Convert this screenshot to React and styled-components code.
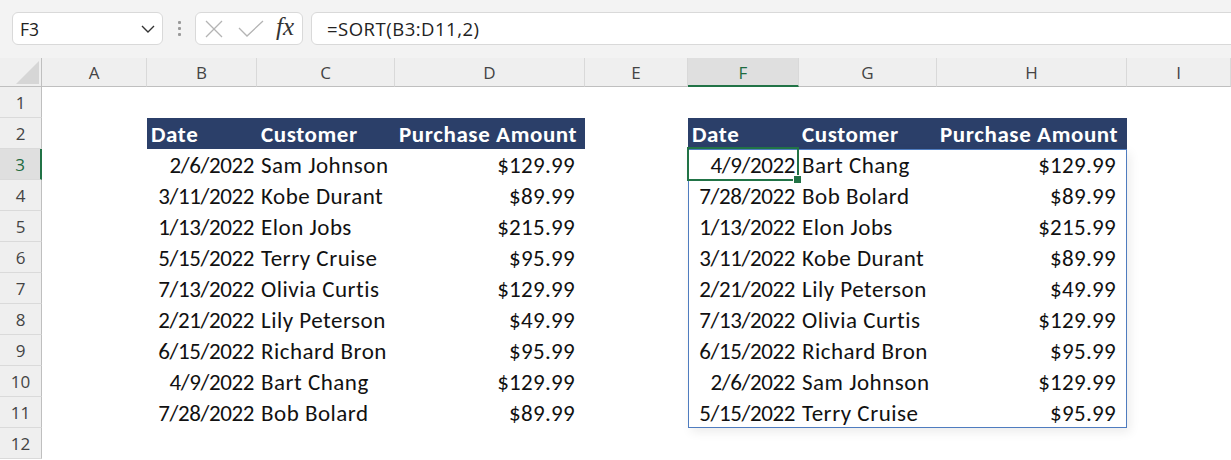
import React from 'react'
import styled, { createGlobalStyle } from 'styled-components'

const GlobalStyle = createGlobalStyle`
  html, body {
    margin: 0;
    padding: 0;
    background: #ffffff;
    overflow: hidden;
  }
  * {
    box-sizing: border-box;
  }
`

const COLS = ['A', 'B', 'C', 'D', 'E', 'F', 'G', 'H', 'I']
const ROWS = [1, 2, 3, 4, 5, 6, 7, 8, 9, 10, 11, 12]

const original = [
  ['2/6/2022', 'Sam Johnson', '$129.99'],
  ['3/11/2022', 'Kobe Durant', '$89.99'],
  ['1/13/2022', 'Elon Jobs', '$215.99'],
  ['5/15/2022', 'Terry Cruise', '$95.99'],
  ['7/13/2022', 'Olivia Curtis', '$129.99'],
  ['2/21/2022', 'Lily Peterson', '$49.99'],
  ['6/15/2022', 'Richard Bron', '$95.99'],
  ['4/9/2022', 'Bart Chang', '$129.99'],
  ['7/28/2022', 'Bob Bolard', '$89.99'],
]

// =SORT(B3:D11,2) -> sorted by the customer column
const sorted = [...original].sort((a, b) => a[1].localeCompare(b[1]))

// alignment / right padding / letter spacing for each kind of value
const kinds = {
  date: { align: 'flex-end', pad: 3, ls: -0.4 },
  text: { align: 'flex-start', pad: 0, ls: 0.5 },
  money: { align: 'flex-end', pad: 10, ls: 0.3 },
}

const App = () => {
  return (
    <>
      <GlobalStyle />
      <Window>
        <FormulaBar>
          <NameBox>
            <span>F3</span>
            <svg width="14" height="8" viewBox="0 0 14 8">
              <polyline points="1,1 7,7 13,1" fill="none" stroke="#333" strokeWidth="1.4" />
            </svg>
          </NameBox>
          <Dots>
            <i />
            <i />
            <i />
          </Dots>
          <IconBox>
            <svg width="20" height="18" viewBox="0 0 20 18">
              <line x1="2" y1="1" x2="18" y2="17" stroke="#b4b4b4" strokeWidth="1.3" />
              <line x1="18" y1="1" x2="2" y2="17" stroke="#b4b4b4" strokeWidth="1.3" />
            </svg>
            <svg width="26" height="17" viewBox="0 0 26 17">
              <polyline points="1,8 9,16 25,1" fill="none" stroke="#b4b4b4" strokeWidth="1.3" />
            </svg>
            <Fx>fx</Fx>
          </IconBox>
          <FormulaInput>=SORT(B3:D11,2)</FormulaInput>
        </FormulaBar>

        <Sheet>
          <Corner>
            <svg width="42" height="29" viewBox="0 0 42 29">
              <polygon points="16,26 39,26 39,3" fill="#d6d6d6" />
            </svg>
          </Corner>
          {COLS.map((c) => (
            <ColHeader key={c} $active={c === 'F'}>{c}</ColHeader>
          ))}
          {ROWS.map((r) => (
            <RowHeader key={r} $row={r} $active={r === 3}>{r}</RowHeader>
          ))}

          <Table $col={3}>
            <HeadRow>
              <HeadCell>Date</HeadCell>
              <HeadCell>Customer</HeadCell>
              <HeadCell>Purchase Amount</HeadCell>
            </HeadRow>
            <Body>
              {original.map((row, i) => (
                <Row key={i}>
                  <Cell $kind="date">{row[0]}</Cell>
                  <Cell $kind="text">{row[1]}</Cell>
                  <Cell $kind="money">{row[2]}</Cell>
                </Row>
              ))}
            </Body>
          </Table>

          <Table $col={7}>
            <HeadRow>
              <HeadCell>Date</HeadCell>
              <HeadCell>Customer</HeadCell>
              <HeadCell>Purchase Amount</HeadCell>
            </HeadRow>
            <Body $framed>
              {sorted.map((row, i) => (
                <Row key={i}>
                  <Cell $kind="date" $selected={i === 0}>{row[0]}</Cell>
                  <Cell $kind="text">{row[1]}</Cell>
                  <Cell $kind="money">{row[2]}</Cell>
                </Row>
              ))}
            </Body>
          </Table>
        </Sheet>
      </Window>
    </>
  )
}

const Window = styled.div`
width: 1231px;
height: 460px;
overflow: hidden;
background: #ffffff;
`

const FormulaBar = styled.div`
height: 58px;
background: #f3f3f3;
display: flex;
align-items: flex-start;
padding: 12px 0 0 12px;
font-family: "Open Sans", "Noto Sans", sans-serif;
color: #222;
`

const NameBox = styled.div`
width: 151px;
height: 33px;
background: #fff;
border: 1px solid #d9d9d9;
border-radius: 6px;
display: flex;
align-items: center;
justify-content: space-between;
padding: 0 7px 0 7px;
font-size: 17.5px;
svg {
    margin-top: 1px;
}
`

const Dots = styled.div`
width: 32px;
height: 33px;
display: flex;
flex-direction: column;
align-items: center;
justify-content: center;
gap: 3px;
i {
    width: 3px;
    height: 3px;
    background: #9a9a9a;
    border-radius: 1px;
}
`

const IconBox = styled.div`
width: 108px;
height: 33px;
background: #fff;
border: 1px solid #d9d9d9;
border-radius: 6px;
display: flex;
align-items: center;
padding: 0 6px 0 8px;
gap: 14px;
`

const Fx = styled.span`
font-family: "Liberation Serif", "DejaVu Serif", serif;
font-style: italic;
font-size: 25px;
color: #333;
margin-left: -2px;
margin-top: -3px;
`

const FormulaInput = styled.div`
flex: 1;
height: 33px;
margin-left: 8px;
margin-right: -10px;
background: #fff;
border: 1px solid #d9d9d9;
border-radius: 6px;
display: flex;
align-items: center;
padding-left: 15px;
font-size: 18.5px;
letter-spacing: 0.5px;
`

const Sheet = styled.div`
display: grid;
grid-template-columns: 42px 105px 110px 138px 190px 103px 111px 138px 190px 1fr;
grid-template-rows: 29px repeat(12, 31px);
font-family: "Open Sans", "Noto Sans", sans-serif;
`

const Corner = styled.div`
background: #efefef;
border-bottom: 1px solid #bfbfbf;
border-right: 1px solid #bfbfbf;
svg {
    display: block;
}
`

const ColHeader = styled.div`
background: ${(p) => (p.$active ? '#dfdfdf' : '#efefef')};
color: ${(p) => (p.$active ? '#1d6b3f' : '#444')};
border-right: 1px solid #d9d9d9;
border-bottom: ${(p) => (p.$active ? '2px solid #217346' : '1px solid #bfbfbf')};
display: flex;
align-items: center;
justify-content: center;
font-size: 17px;
padding-top: ${(p) => (p.$active ? '1px' : '0')};
`

const RowHeader = styled.div`
grid-column: 1;
grid-row: ${(p) => p.$row + 1};
background: ${(p) => (p.$active ? '#dfdfdf' : '#efefef')};
color: ${(p) => (p.$active ? '#1d6b3f' : '#444')};
border-bottom: 1px solid #dadada;
border-right: ${(p) => (p.$active ? '2px solid #217346' : '1px solid #bfbfbf')};
display: flex;
align-items: center;
justify-content: center;
font-size: 17px;
`

const Table = styled.div`
grid-column: ${(p) => p.$col} / span 3;
grid-row: 3 / 13;
display: flex;
flex-direction: column;
font-family: "Carlito", "Lato", "Liberation Sans", sans-serif;
font-size: 23px;
color: #111;
`

const HeadRow = styled.div`
display: grid;
grid-template-columns: 110px 138px 190px;
height: 31px;
background: #2b3f69;
color: #fff;
font-weight: 700;
`

const HeadCell = styled.div`
display: flex;
align-items: center;
padding: 1px 0 0 4px;
white-space: nowrap;
letter-spacing: 0.6px;
`

const Body = styled.div`
flex: 1;
outline: ${(p) => (p.$framed ? '1px solid #4f7cbf' : 'none')};
outline-offset: -1px;
box-shadow: ${(p) => (p.$framed ? '3px 4px 10px rgba(0, 0, 0, 0.08)' : 'none')};
`

const Row = styled.div`
display: grid;
grid-template-columns: 110px 138px 190px;
height: 31px;
`

const Cell = styled.div`
position: relative;
display: flex;
align-items: center;
justify-content: ${(p) => kinds[p.$kind].align};
padding: 1px ${(p) => kinds[p.$kind].pad}px 0 4px;
letter-spacing: ${(p) => kinds[p.$kind].ls}px;
white-space: nowrap;
&::before {
    content: '';
    display: ${(p) => (p.$selected ? 'block' : 'none')};
    position: absolute;
    inset: -2px -1px -1px -1px;
    border: 2px solid #217346;
}
&::after {
    content: '';
    display: ${(p) => (p.$selected ? 'block' : 'none')};
    position: absolute;
    right: -4px;
    bottom: -4px;
    width: 7px;
    height: 7px;
    background: #217346;
    border: 1px solid #fff;
}
`

export default App
